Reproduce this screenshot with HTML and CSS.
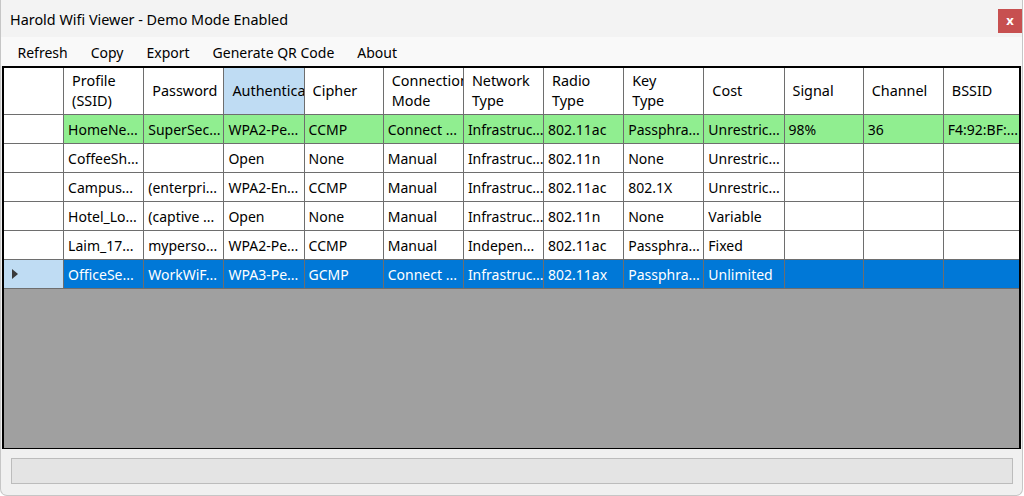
FILE: index.html
```html
<!DOCTYPE html>
<html lang="en">
<head>
    <meta charset="UTF-8">
    <title>Harold Wifi Viewer - Demo Mode Enabled</title>
    <link rel="stylesheet" href="styles.css">
</head>
<body>

<div class="window">
    <div class="title-bar">
        <span class="title">Harold Wifi Viewer - Demo Mode Enabled</span>
        <div class="close-btn">x</div>
    </div>

    <div class="menu-bar">
        <span class="menu-item">Refresh</span>
        <span class="menu-item">Copy</span>
        <span class="menu-item">Export</span>
        <span class="menu-item">Generate QR Code</span>
        <span class="menu-item">About</span>
    </div>

    <div class="grid">
        <table>
            <colgroup>
                <col class="col-rowhead">
                <col class="col">
                <col class="col">
                <col class="col">
                <col class="col-narrow">
                <col class="col">
                <col class="col">
                <col class="col">
                <col class="col">
                <col class="col">
                <col class="col-narrow">
                <col class="col">
                <col class="col">
            </colgroup>
            <thead>
                <tr>
                    <th class="rowhead"></th>
                    <th>Profile<br>(SSID)</th>
                    <th>Password</th>
                    <th class="current">Authentication</th>
                    <th>Cipher</th>
                    <th>Connection<br>Mode</th>
                    <th>Network<br>Type</th>
                    <th>Radio<br>Type</th>
                    <th>Key<br>Type</th>
                    <th>Cost</th>
                    <th>Signal</th>
                    <th>Channel</th>
                    <th>BSSID</th>
                </tr>
            </thead>
            <tbody>
                <tr class="connected">
                    <td class="rowhead"></td>
                    <td>HomeNe...</td>
                    <td>SuperSec...</td>
                    <td>WPA2-Pe...</td>
                    <td>CCMP</td>
                    <td>Connect ...</td>
                    <td>Infrastruc...</td>
                    <td>802.11ac</td>
                    <td>Passphra...</td>
                    <td>Unrestric...</td>
                    <td>98%</td>
                    <td>36</td>
                    <td>F4:92:BF:...</td>
                </tr>
                <tr>
                    <td class="rowhead"></td>
                    <td>CoffeeSh...</td>
                    <td></td>
                    <td>Open</td>
                    <td>None</td>
                    <td>Manual</td>
                    <td>Infrastruc...</td>
                    <td>802.11n</td>
                    <td>None</td>
                    <td>Unrestric...</td>
                    <td></td>
                    <td></td>
                    <td></td>
                </tr>
                <tr>
                    <td class="rowhead"></td>
                    <td>Campus...</td>
                    <td>(enterpri...</td>
                    <td>WPA2-En...</td>
                    <td>CCMP</td>
                    <td>Manual</td>
                    <td>Infrastruc...</td>
                    <td>802.11ac</td>
                    <td>802.1X</td>
                    <td>Unrestric...</td>
                    <td></td>
                    <td></td>
                    <td></td>
                </tr>
                <tr>
                    <td class="rowhead"></td>
                    <td>Hotel_Lo...</td>
                    <td>(captive ...</td>
                    <td>Open</td>
                    <td>None</td>
                    <td>Manual</td>
                    <td>Infrastruc...</td>
                    <td>802.11n</td>
                    <td>None</td>
                    <td>Variable</td>
                    <td></td>
                    <td></td>
                    <td></td>
                </tr>
                <tr>
                    <td class="rowhead"></td>
                    <td>Laim_17...</td>
                    <td>myperso...</td>
                    <td>WPA2-Pe...</td>
                    <td>CCMP</td>
                    <td>Manual</td>
                    <td>Indepen...</td>
                    <td>802.11ac</td>
                    <td>Passphra...</td>
                    <td>Fixed</td>
                    <td></td>
                    <td></td>
                    <td></td>
                </tr>
                <tr class="selected">
                    <td class="rowhead"><span class="row-arrow"></span></td>
                    <td>OfficeSe...</td>
                    <td>WorkWiF...</td>
                    <td>WPA3-Pe...</td>
                    <td>GCMP</td>
                    <td>Connect ...</td>
                    <td>Infrastruc...</td>
                    <td>802.11ax</td>
                    <td>Passphra...</td>
                    <td>Unlimited</td>
                    <td></td>
                    <td></td>
                    <td></td>
                </tr>
            </tbody>
        </table>
    </div>

    <div class="status-bar"></div>
</div>

</body>
</html>
```

FILE: styles.css
```css
body {
    margin: 0;
    background-color: #ffffff;
    font-family: "Noto Sans", "Segoe UI", sans-serif;
    font-size: 14.4px;
    color: #000;
}
.window {
    width: 1023px;
    height: 496px;
    box-sizing: border-box;
    display: flex;
    flex-direction: column;
    background-color: #f0f0f0;
    border: 1px solid #c6c6c6;
    border-top: none;
    border-radius: 0 0 7px 7px;
    overflow: hidden;
}
.title-bar {
    height: 37px;
    flex-shrink: 0;
    display: flex;
    align-items: center;
    padding-left: 9px;
    background-color: #f3f3f3;
}
.title {
    flex: 1;
    padding-top: 2px;
}
.close-btn {
    align-self: flex-start;
    margin-top: 9px;
    width: 24px;
    height: 24px;
    background-color: #c75050;
    color: #fff;
    font-weight: bold;
    font-size: 13px;
    line-height: 22px;
    text-align: center;
}
.menu-bar {
    height: 29px;
    flex-shrink: 0;
    display: flex;
    align-items: center;
    padding-left: 5px;
    padding-top: 2px;
    box-sizing: border-box;
    background-color: #f9f9f9;
    font-size: 14px;
}
.menu-item {
    padding: 0 11.5px;
}
.grid {
    height: 383px;
    flex-shrink: 0;
    margin: 0 1px;
    box-sizing: border-box;
    border: 1px solid #000;
    border-top-width: 2px;
    border-left-width: 2px;
    border-right-width: 2px;
    background-color: #a0a0a0;
    overflow: hidden;
}
table {
    table-layout: fixed;
    border-collapse: separate;
    border-spacing: 0;
    width: 1020px;
}
.col-rowhead {
    width: 60px;
}
.col {
    width: 80px;
}
.col-narrow {
    width: 79px;
}
th, td {
    box-sizing: border-box;
    border-right: 1px solid #6e6e6e;
    border-bottom: 1px solid #6e6e6e;
    background-color: #fff;
    white-space: nowrap;
    overflow: hidden;
    text-align: left;
    font-weight: normal;
}
th {
    height: 47px;
    padding: 0 0 0 8px;
    line-height: 20px;
}
th.current {
    background-color: #bfdcf3;
}
td {
    height: 29px;
    padding: 0 0 0 4px;
    font-size: 14px;
}
.rowhead {
    padding: 0;
}
.connected td {
    background-color: #90ee90;
}
.connected td.rowhead {
    background-color: #fff;
}
.selected td {
    background-color: #0078d7;
    color: #fff;
}
.selected td.rowhead {
    background-color: #bfdcf3;
}
.row-arrow {
    display: block;
    margin-left: 8px;
    width: 0;
    height: 0;
    border-top: 5px solid transparent;
    border-bottom: 5px solid transparent;
    border-left: 6px solid #3a3a3a;
}
.status-bar {
    height: 26px;
    margin: 9px 9px 0 10px;
    box-sizing: border-box;
    border: 1px solid #bcbcbc;
    background-color: #e4e4e4;
}
```
